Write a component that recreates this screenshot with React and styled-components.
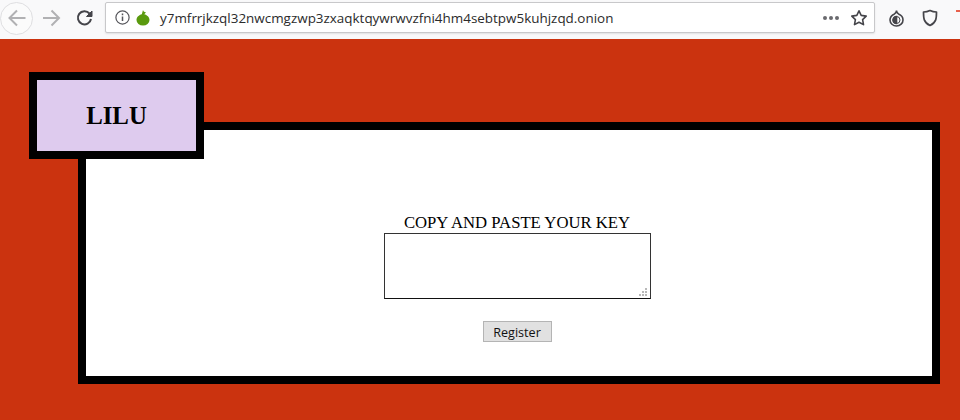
import React from 'react'
import styled, { createGlobalStyle } from 'styled-components'

const Global = createGlobalStyle`
  html, body { margin: 0; padding: 0; background: #cb330f; }
  body { width: 960px; height: 420px; overflow: hidden; font-family: "Liberation Serif", serif; }
`

const Toolbar = styled.div`
  height: 39px;
  background: #f9f9fa;
  display: flex;
  align-items: flex-start;
  box-sizing: border-box;
  padding-top: 2px;
`
const NavGroup = styled.div`
  width: 105px;
  height: 31px;
  flex: none;
  display: flex;
  align-items: center;
`
const BackButton = styled.div`
  width: 33px;
  height: 33px;
  margin: 0 0 -1px 0;
  flex: none;
  box-sizing: border-box;
  border: 1px solid #dfdfe1;
  border-radius: 50%;
  background: #fbfbfb;
  display: flex;
  align-items: center;
  justify-content: center;
`
const NavIcon = styled.svg`
  flex: none;
  margin-left: ${p => p.$left || 0}px;
  display: block;
`
const UrlBar = styled.div`
  width: 770px;
  height: 31px;
  flex: none;
  box-sizing: border-box;
  background: #fff;
  border: 1px solid #c8c8ca;
  border-radius: 2px;
  box-shadow: 0 1px 2px rgba(0, 0, 0, 0.1);
  display: flex;
  align-items: center;
  padding: 0 6px 0 9px;
`
const UrlText = styled.span`
  margin-left: 10px;
  flex: 1;
  font: 13.45px "Open Sans", "Noto Sans", sans-serif;
  color: #2b2b2b;
  white-space: nowrap;
`
const Dots = styled.span`
  display: flex;
  gap: 2px;
  margin-right: 11px;
  i {
    width: 4px;
    height: 4px;
    border-radius: 50%;
    background: #6a6a6e;
  }
`
const RightIcons = styled.div`
  flex: 1;
  height: 31px;
  display: flex;
  align-items: center;
  padding-left: 13px;
  gap: 17px;
`
const RedMark = styled.span`
  width: 4px;
  height: 2px;
  margin: -14px 0 0 1px;
  background: #e8604c;
`
const Page = styled.main`
  padding: 83px 20px 0 78px;
`
const Card = styled.section`
  position: relative;
  width: 862px;
  height: 262px;
  box-sizing: border-box;
  border: 8px solid #000;
  background: #fff;
  padding: 83px 0 0 16px;
  display: flex;
  flex-direction: column;
  align-items: center;
`
const Logo = styled.div`
  position: absolute;
  left: -57px;
  top: -58px;
  width: 175px;
  height: 87px;
  box-sizing: border-box;
  border: 8px solid #000;
  background: #decbee;
  display: flex;
  align-items: center;
  justify-content: center;
  font-size: 24.8px;
  font-weight: 700;
  color: #000;
`
const Label = styled.label`
  font-size: 16.7px;
  line-height: 19px;
  margin-bottom: 1px;
  color: #000;
`
const KeyWrap = styled.div`
  position: relative;
  width: 267px;
  height: 66px;
`
const KeyBox = styled.textarea`
  width: 100%;
  height: 100%;
  box-sizing: border-box;
  display: block;
  margin: 0;
  border: 1px solid #333;
  border-bottom-color: #111;
  border-radius: 0;
  background: #fff;
  resize: none;
`
const Grip = styled.svg`
  position: absolute;
  right: 3px;
  bottom: 2px;
`
const Submit = styled.button`
  width: 69px;
  height: 21px;
  margin-top: 22px;
  padding: 1px 0 0;
  box-sizing: border-box;
  border: 1px solid #b4b4b4;
  border-radius: 0;
  background: #e1e1e1;
  font: 12.6px "Open Sans", "Noto Sans", sans-serif;
  color: #111;
`

const App = () => (
  <>
    <Global />
    <Toolbar>
      <NavGroup>
        <BackButton>
          <svg width="20" height="20" viewBox="0 0 20 20" fill="none" stroke="#b1b1b3" strokeWidth="2">
            <path d="M18.500 10H2.500M10 2.500L2.500 10l7.500 7.500" />
          </svg>
        </BackButton>
        <NavIcon $left={8} width="20" height="20" viewBox="0 0 20 20" fill="none" stroke="#b1b1b3" strokeWidth="2">
          <path d="M2 10h16M10.500 2.500L18 10l-7.500 7.500" />
        </NavIcon>
        <NavIcon $left={14} width="20" height="20" viewBox="0 0 20 20" fill="none" stroke="#45454a" strokeWidth="2">
          <path d="M14.500 5.500A6.600 6.600 0 1 0 16 11" />
          <path d="M17 3v5.500h-5.500z" fill="#45454a" strokeWidth="1" />
        </NavIcon>
      </NavGroup>
      <UrlBar>
        <svg width="15" height="15" viewBox="0 0 15 15" fill="none" stroke="#55555a" strokeWidth="1.2">
          <circle cx="7.500" cy="7.500" r="6.600" />
          <path d="M7.500 6.500v4.500M7.500 3.600v1.600" strokeWidth="1.500" />
        </svg>
        <NavIcon $left={6} width="14" height="17" viewBox="0 0 14 17">
          <path d="M7 1c.4 1.500 1.300 2.100 3 2.400L8.200 5.200C11 6 13.500 8 13.500 11A6.500 5.500 0 0 1 .5 11C.5 8 3 6 5.800 5.200z" fill="#5a9a0e" />
        </NavIcon>
        <UrlText>y7mfrrjkzql32nwcmgzwp3zxaqktqywrwvzfni4hm4sebtpw5kuhjzqd.onion</UrlText>
        <Dots><i /><i /><i /></Dots>
        <svg width="18" height="18" viewBox="0 0 18 18" fill="none" stroke="#45454a" strokeWidth="1.600" strokeLinejoin="round">
          <path d="M9 1.800l2.200 4.600 5 .7-3.600 3.500.9 5L9 13.200l-4.500 2.400.9-5L1.800 7.100l5-.7z" />
        </svg>
      </UrlBar>
      <RightIcons>
        <svg width="17" height="18" viewBox="0 0 17 18" fill="none" stroke="#45454a" strokeWidth="1.600">
          <path d="M8.500 1.500c0 1.500.8 2.500 2 3.400 2.500 1 4.500 3 4.500 6A6.500 6 0 0 1 2 11c0-3 2-5 4.500-6.100C7.700 4 8.500 3 8.500 1.500z" />
          <path d="M8.500 7.500a3.500 3.500 0 0 0 0 7z" fill="#45454a" />
          <circle cx="8.500" cy="11" r="3.500" strokeWidth="1" />
        </svg>
        <svg width="16" height="18" viewBox="0 0 16 18" fill="none" stroke="#45454a" strokeWidth="1.700" strokeLinejoin="round">
          <path d="M8 1.500c2 1 4.500 1.500 6.500 1.500 0 6 0 10.500-6.500 13.500C1.500 13.500 1.500 9 1.500 3 3.500 3 6 2.500 8 1.500z" />
        </svg>
        <RedMark />
      </RightIcons>
    </Toolbar>
    <Page>
      <Card>
        <Logo>LILU</Logo>
        <Label htmlFor="key">COPY AND PASTE YOUR KEY</Label>
        <KeyWrap>
          <KeyBox id="key" />
          <Grip width="9" height="9" viewBox="0 0 9 9" fill="#b9b9b9">
            <rect x="6" y="0" width="2" height="2" />
            <rect x="3" y="3" width="2" height="2" />
            <rect x="6" y="3" width="2" height="2" />
            <rect x="0" y="6" width="2" height="2" />
            <rect x="3" y="6" width="2" height="2" />
            <rect x="6" y="6" width="2" height="2" />
          </Grip>
        </KeyWrap>
        <Submit type="button">Register</Submit>
      </Card>
    </Page>
  </>
)

export default App
